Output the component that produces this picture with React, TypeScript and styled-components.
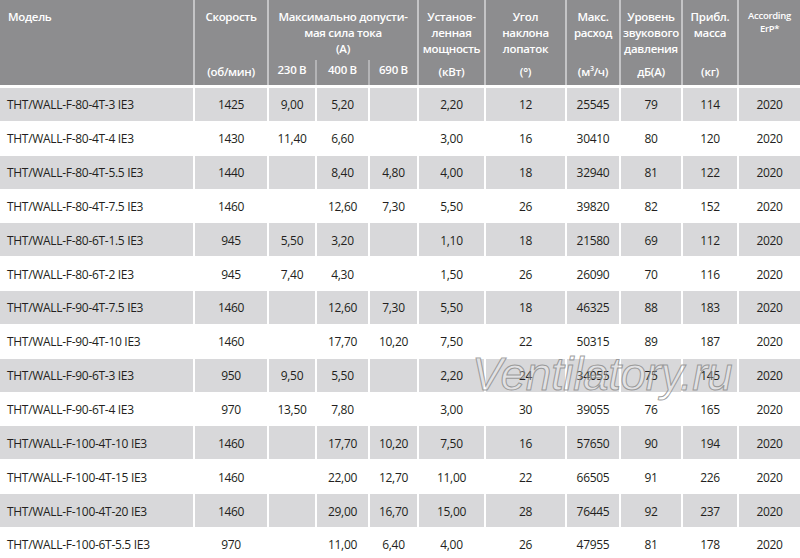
import React from 'react';
import styled, { createGlobalStyle } from 'styled-components';

const GlobalStyle = createGlobalStyle`
  html, body {
    margin: 0;
    padding: 0;
    background: #ffffff;
  }
  body {
    font-family: "Open Sans", "Noto Sans", sans-serif;
  }
`;

const COLS = '193px 74px 48px 53px 49px 67px 81px 54px 62px 56px 63px';

const Page = styled.div`
  position: relative;
  width: 800px;
  height: 558px;
  overflow: hidden;
  background: #ffffff;
`;

const Head = styled.div`
  display: grid;
  grid-template-columns: ${COLS};
  grid-template-rows: 60px 25px;
  height: 85px;
  background: #8d8d8f;
  color: #ffffff;
  font-weight: 600;
  font-size: 11.5px;
  letter-spacing: -0.3px;
  line-height: 16px;
  margin-bottom: 3px;
`;

const HeadCell = styled.div<{ $first?: boolean; $small?: boolean }>`
  grid-row: span 2;
  display: flex;
  flex-direction: column;
  justify-content: space-between;
  align-items: ${(p) => (p.$first ? 'flex-start' : 'center')};
  text-align: ${(p) => (p.$first ? 'left' : 'center')};
  padding: 9px ${(p) => (p.$first ? '8px' : '0')} 5px;
  border-left: ${(p) => (p.$first ? 'none' : '2px solid #c4c4c6')};
  font-size: ${(p) => (p.$small ? '9.5px' : 'inherit')};
  line-height: ${(p) => (p.$small ? '13px' : 'inherit')};
  white-space: pre-line;
`;

const Group = styled.div`
  grid-column: span 3;
  border-left: 2px solid #c4c4c6;
  padding-top: 9px;
  text-align: center;
  white-space: pre-line;
`;

const SubCell = styled.div<{ $edge?: boolean }>`
  display: flex;
  align-items: center;
  justify-content: center;
  padding-bottom: 5px;
  border-left: 2px solid ${(p) => (p.$edge ? '#c4c4c6' : '#b4b4b6')};
`;

const Sup = styled.sup`
  font-size: 7px;
  line-height: 0;
`;

const Body = styled.div`
  display: grid;
  grid-template-columns: ${COLS};
  grid-auto-rows: 33.85px;
  font-size: 12px;
  letter-spacing: -0.3px;
  color: #231f20;
`;

const Cell = styled.div<{ $odd: boolean; $first?: boolean }>`
  display: flex;
  align-items: center;
  justify-content: ${(p) => (p.$first ? 'flex-start' : 'center')};
  padding-left: ${(p) => (p.$first ? '7px' : '0')};
  padding-top: 1px;
  background: ${(p) => (p.$odd ? '#d8d8da' : '#ffffff')};
  border-left: ${(p) => (p.$first ? 'none' : '2px solid #ffffff')};
  border-bottom: 1px solid #ffffff;
  white-space: nowrap;
`;

const Watermark = styled.div`
  position: absolute;
  left: 472px;
  top: 347px;
  font-family: "Liberation Sans", Arial, sans-serif;
  font-style: italic;
  font-size: 46px;
  letter-spacing: -0.4px;
  color: rgba(255, 255, 255, 0.25);
  -webkit-text-stroke: 1px rgba(135, 135, 135, 0.8);
  pointer-events: none;
`;

type Row = [string, string, string, string, string, string, string, string, string, string, string];

const rows: Row[] = [
  ['THT/WALL-F-80-4T-3 IE3', '1425', '9,00', '5,20', '', '2,20', '12', '25545', '79', '114', '2020'],
  ['THT/WALL-F-80-4T-4 IE3', '1430', '11,40', '6,60', '', '3,00', '16', '30410', '80', '120', '2020'],
  ['THT/WALL-F-80-4T-5.5 IE3', '1440', '', '8,40', '4,80', '4,00', '18', '32940', '81', '122', '2020'],
  ['THT/WALL-F-80-4T-7.5 IE3', '1460', '', '12,60', '7,30', '5,50', '26', '39820', '82', '152', '2020'],
  ['THT/WALL-F-80-6T-1.5 IE3', '945', '5,50', '3,20', '', '1,10', '18', '21580', '69', '112', '2020'],
  ['THT/WALL-F-80-6T-2 IE3', '945', '7,40', '4,30', '', '1,50', '26', '26090', '70', '116', '2020'],
  ['THT/WALL-F-90-4T-7.5 IE3', '1460', '', '12,60', '7,30', '5,50', '18', '46325', '88', '183', '2020'],
  ['THT/WALL-F-90-4T-10 IE3', '1460', '', '17,70', '10,20', '7,50', '22', '50315', '89', '187', '2020'],
  ['THT/WALL-F-90-6T-3 IE3', '950', '9,50', '5,50', '', '2,20', '24', '34055', '75', '145', '2020'],
  ['THT/WALL-F-90-6T-4 IE3', '970', '13,50', '7,80', '', '3,00', '30', '39055', '76', '165', '2020'],
  ['THT/WALL-F-100-4T-10 IE3', '1460', '', '17,70', '10,20', '7,50', '16', '57650', '90', '194', '2020'],
  ['THT/WALL-F-100-4T-15 IE3', '1460', '', '22,00', '12,70', '11,00', '22', '66505', '91', '226', '2020'],
  ['THT/WALL-F-100-4T-20 IE3', '1460', '', '29,00', '16,70', '15,00', '28', '76445', '92', '237', '2020'],
  ['THT/WALL-F-100-6T-5.5 IE3', '970', '', '11,00', '6,40', '4,00', '26', '47955', '81', '178', '2020'],
];

function Header() {
  return (
    <Head>
      <HeadCell $first>Модель</HeadCell>
      <HeadCell>
        <span>Скорость</span>
        <span>(об/мин)</span>
      </HeadCell>
      <Group>{'Максимально допусти-\nмая сила тока\n(А)'}</Group>
      <HeadCell>
        <span>{'Установ-\nленная\nмощность'}</span>
        <span>(кВт)</span>
      </HeadCell>
      <HeadCell>
        <span>{'Угол\nнаклона\nлопаток'}</span>
        <span>(°)</span>
      </HeadCell>
      <HeadCell>
        <span>{'Макс.\nрасход'}</span>
        <span>
          (м<Sup>3</Sup>/ч)
        </span>
      </HeadCell>
      <HeadCell>
        <span>{'Уровень\nзвукового\nдавления'}</span>
        <span>дБ(А)</span>
      </HeadCell>
      <HeadCell>
        <span>{'Прибл.\nмасса'}</span>
        <span>(кг)</span>
      </HeadCell>
      <HeadCell $small>
        <span>{'According\nErP*'}</span>
        <span />
      </HeadCell>
      <SubCell $edge>230 В</SubCell>
      <SubCell>400 В</SubCell>
      <SubCell>690 В</SubCell>
    </Head>
  );
}

export default function App() {
  return (
    <Page>
      <GlobalStyle />
      <Header />
      <Body>
        {rows.map((row, i) =>
          row.map((value, j) => (
            <Cell key={`${i}-${j}`} $odd={i % 2 === 0} $first={j === 0}>
              {value}
            </Cell>
          ))
        )}
      </Body>
      <Watermark aria-hidden="true">Ventilatory.ru</Watermark>
    </Page>
  );
}
